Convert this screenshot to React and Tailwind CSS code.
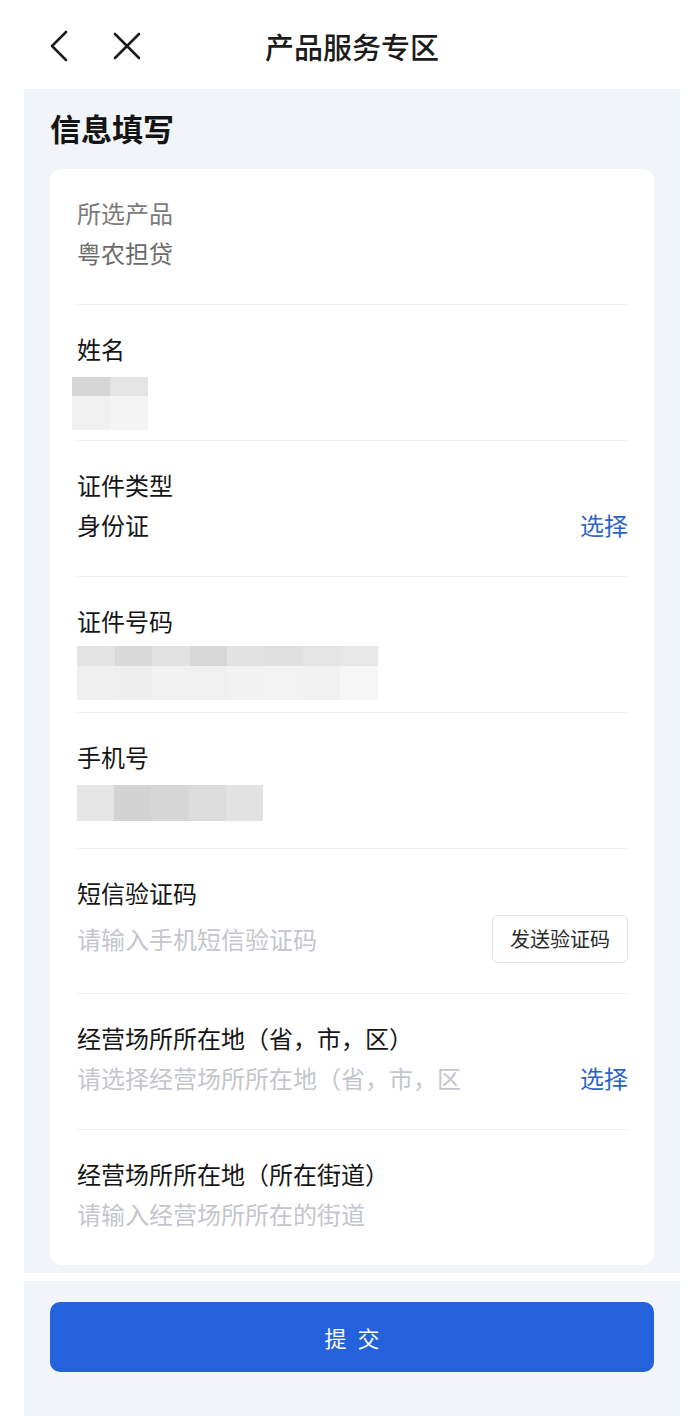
import React from 'react';

const cjk = "font-['Noto_Sans_CJK_SC','Noto_Sans',sans-serif]";

// pixelated blur over masked personal data
const Mosaic = ({ cellW, rows, className = '' }) => (
    <div className={`flex flex-col ${className}`}>
        {rows.map((row, i) => (
            <div key={i} className="flex">
                {row.cells.map((c, j) => (
                    <div key={j} style={{ width: cellW, height: row.h, background: c }} />
                ))}
            </div>
        ))}
    </div>
);

const Field = ({ label, labelClass = 'text-[#151515]', children, last, valueClass = 'h-[32px]', gap = 'mt-[8px]', pb = 'pb-[35px]' }) => (
    <div className={`pt-[28px] ${pb} ${last ? '' : 'border-b border-[#eeeeee]'}`}>
        <div className={`h-[32px] leading-[32px] text-[24px] ${labelClass}`}>{label}</div>
        <div className={`${gap} ${valueClass} flex items-center justify-between`}>{children}</div>
    </div>
);

const Pick = () => <span className="text-[24px] leading-[32px] text-[#2c64c9]">选择</span>;

export default function App() {
    return (
        <div className={`w-[700px] h-[1416px] bg-white ${cjk}`}>
            <header className="h-[89px] grid grid-cols-[1fr_auto_1fr] items-center pt-[2px]">
                <div className="flex items-center pl-[48px] gap-[42px]">
                    <svg width="22" height="32" viewBox="0 0 22 32" fill="none" stroke="#1c1c1c" strokeWidth="2.6" strokeLinecap="round" strokeLinejoin="round">
                        <path d="M18 2 L4 16 L18 30" />
                    </svg>
                    <svg width="30" height="28" viewBox="0 0 30 28" fill="none" stroke="#1c1c1c" strokeWidth="2.6" strokeLinecap="round">
                        <path d="M3 2 L27 26 M27 2 L3 26" />
                    </svg>
                </div>
                <div className="text-[29px] font-medium text-[#1c1c1c] leading-[40px] pl-[4px]">产品服务专区</div>
                <div />
            </header>

            <section className="ml-[24px] w-[656px] bg-[#f1f4f9] px-[26px] pt-[19px] pb-[8px]">
                <h1 className="text-[31px] font-bold leading-[40px] text-[#141414]">信息填写</h1>
                <div className="mt-[21px] bg-white rounded-[12px] pl-[27px] pr-[26px]">
                    <Field label="所选产品" labelClass="text-[#7a7a7a]">
                        <span className="text-[24px] leading-[32px] text-[#6b6b6b]">粤农担贷</span>
                    </Field>
                    <Field label="姓名">
                        <div className="h-[32px] self-start">
                            <Mosaic
                                className="mt-[4px] -ml-[5px]"
                                cellW={38}
                                rows={[
                                    { h: 19, cells: ['#d5d5d5', '#e4e4e4'] },
                                    { h: 34, cells: ['#f0f0f0', '#f4f4f4'] },
                                ]}
                            />
                        </div>
                    </Field>
                    <Field label="证件类型">
                        <span className="text-[24px] leading-[32px] text-[#151515]">身份证</span>
                        <Pick />
                    </Field>
                    <Field label="证件号码">
                        <div className="h-[32px] self-start">
                            <Mosaic
                                className="mt-[1px]"
                                cellW={37.6}
                                rows={[
                                    { h: 20, cells: ['#e3e3e3', '#d9d9d9', '#e1e1e1', '#d7d7d7', '#e2e2e2', '#e0e0e0', '#e4e4e4', '#e7e7e7'] },
                                    { h: 34, cells: ['#efefef', '#eeeeee', '#f1f1f1', '#f0f0f0', '#f2f2f2', '#f3f3f3', '#f1f1f1', '#f6f6f6'] },
                                ]}
                            />
                        </div>
                    </Field>
                    <Field label="手机号">
                        <div className="h-[32px] self-start">
                            <Mosaic
                                className="mt-[4px]"
                                cellW={37.2}
                                rows={[
                                    { h: 36, cells: ['#e6e6e6', '#d3d3d3', '#d6d6d6', '#dcdcdc', '#e2e2e2'] },
                                ]}
                            />
                        </div>
                    </Field>
                    <Field label="短信验证码" valueClass="h-[48px]" gap="mt-[6px]" pb="pb-[30px]">
                        <span className="text-[24px] leading-[32px] text-[#c4c6cb]">请输入手机短信验证码</span>
                        <button className="h-[48px] w-[136px] rounded-[6px] border border-[#e2e2e2] text-[20px] text-[#2a2a2a] bg-white">
                            发送验证码
                        </button>
                    </Field>
                    <Field label="经营场所所在地（省，市，区）">
                        <span className="text-[24px] leading-[32px] text-[#c4c6cb]">请选择经营场所所在地（省，市，区</span>
                        <Pick />
                    </Field>
                    <Field label="经营场所所在地（所在街道）" last>
                        <span className="text-[24px] leading-[32px] text-[#c4c6cb]">请输入经营场所所在的街道</span>
                    </Field>
                </div>
            </section>

            <footer className="mt-[8px] ml-[24px] w-[656px] h-[135px] bg-[#f1f4f9] px-[26px] pt-[21px]">
                <button className="w-full h-[70px] rounded-[10px] bg-[#2462dc] text-white text-[22px] tracking-[0.5em] pl-[0.5em]">
                    提交
                </button>
            </footer>
        </div>
    );
}
